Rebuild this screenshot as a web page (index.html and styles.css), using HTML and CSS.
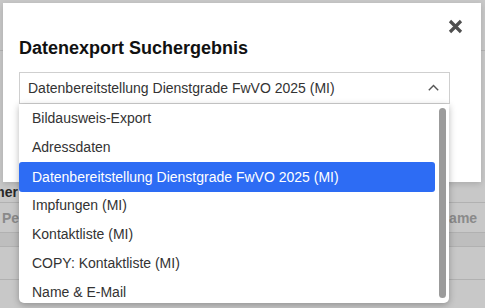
FILE: index.html
```html
<!DOCTYPE html>
<html lang="de">
<head>
<meta charset="utf-8">
<title>Datenexport Suchergebnis</title>
<link rel="stylesheet" href="styles.css">
</head>
<body>
<div class="page">
  <div class="page-head"></div>
  <div class="page-gap"></div>
  <div class="table">
    <div class="row row-head">
      <div class="cell cell-first"><span>Dienstnummer</span></div>
    </div>
    <div class="row row-filter">
      <div class="cell cell-ph">Personalnummer</div>
      <div class="cell cell-ph cell-name">Name</div>
    </div>
    <div class="row row-band"></div>
    <div class="row row-data"></div>
    <div class="row row-data"></div>
  </div>
</div>
<div class="overlay"></div>
<div class="modal">
  <button class="close" aria-label="Schließen">
    <svg width="15" height="15" viewBox="0 0 15 15"><path d="M2 2 L13 13 M13 2 L2 13" stroke="#4f4f4f" stroke-width="3.2" stroke-linecap="butt" fill="none"/></svg>
  </button>
  <h2 class="title">Datenexport Suchergebnis</h2>
  <div class="select-wrap">
    <div class="select">
      <span class="select-text">Datenbereitstellung Dienstgrade FwVO 2025 (MI)</span>
      <svg class="chev" width="11" height="7" viewBox="0 0 11 7"><path d="M0.8 6.2 L5.5 1.5 L10.2 6.2" stroke="#555" stroke-width="1.4" fill="none"/></svg>
    </div>
    <div class="menu">
      <ul class="options">
        <li class="opt">Bildausweis-Export</li>
        <li class="opt">Adressdaten</li>
        <li class="opt opt-active">Datenbereitstellung Dienstgrade FwVO 2025 (MI)</li>
        <li class="opt">Impfungen (MI)</li>
        <li class="opt">Kontaktliste (MI)</li>
        <li class="opt">COPY: Kontaktliste (MI)</li>
        <li class="opt">Name &amp; E-Mail</li>
      </ul>
      <div class="thumb"></div>
    </div>
  </div>
</div>
</body>
</html>
```

FILE: styles.css
```css
* { box-sizing: border-box; }
html, body { margin: 0; padding: 0; }
body {
  width: 485px;
  height: 308px;
  overflow: hidden;
  font-family: "Liberation Sans", Arial, sans-serif;
  background: #fff;
  position: relative;
}
.page { width: 485px; }
.page-head { height: 51px; border-bottom: 1px solid #e4e4e4; }
.page-gap { height: 131px; }
.table { display: flex; flex-direction: column; }
.row { display: flex; justify-content: space-between; border-bottom: 1px solid #e2e2e2; }
.row-head { height: 21px; align-items: center; }
.row-filter { height: 30px; align-items: center; }
.row-band { height: 14px; background: #f3f3f3; }
.row-data { height: 33px; }
.cell { font-size: 14px; font-weight: bold; white-space: nowrap; }
.cell-first {
  width: 18px; overflow: hidden; display: flex; justify-content: flex-end;
  color: #333;
}
.cell-ph { color: #b0b0b0; padding-left: 2px; }
.cell-name { width: 46px; padding-left: 0; }
.overlay {
  position: absolute; inset: 0;
  background: rgba(0, 0, 0, 0.215);
}
.modal {
  position: absolute;
  left: 3px; top: 3px;
  width: 478px; height: 179px;
  background: #fff;
  padding: 34px 31px 0 16px;
  box-shadow: 0 2px 6px rgba(0, 0, 0, 0.15);
}
.close {
  position: absolute;
  top: 16px; right: 18px;
  width: 15px; height: 15px;
  padding: 0; margin: 0;
  border: 0; background: none;
  display: block;
}
.close svg { display: block; }
.title {
  margin: 0;
  font-size: 18px;
  line-height: 22px;
  font-weight: bold;
  color: #111;
}
.select-wrap { position: relative; margin-top: 13px; width: 431px; }
.select {
  height: 32px;
  border: 1px solid #cfcfcf;
  display: flex;
  align-items: center;
  justify-content: space-between;
  padding: 0 10px 0 8px;
  font-size: 14px;
  color: #333;
}
.chev { display: block; margin-top: -1px; }
.menu {
  position: absolute;
  left: 0; top: 32px;
  width: 430px; height: 199px;
  background: #fff;
  border-radius: 0 0 5px 5px;
  box-shadow: 0 2px 7px rgba(0, 0, 0, 0.28);
  overflow: hidden;
  padding-right: 14px;
}
.options { list-style: none; margin: 0; padding: 0; }
.opt {
  height: 29px;
  line-height: 29px;
  padding-left: 13px;
  font-size: 14px;
  color: #333;
  white-space: nowrap;
  border-radius: 3px;
}
.opt-active { background: #2d6cf4; color: #fff; height: 30px; line-height: 30px; margin-bottom: -1px; }
.thumb {
  position: absolute;
  right: 3px; top: 4px; bottom: 5px;
  width: 7px;
  border-radius: 4px;
  background: #9b9b9b;
}
```
